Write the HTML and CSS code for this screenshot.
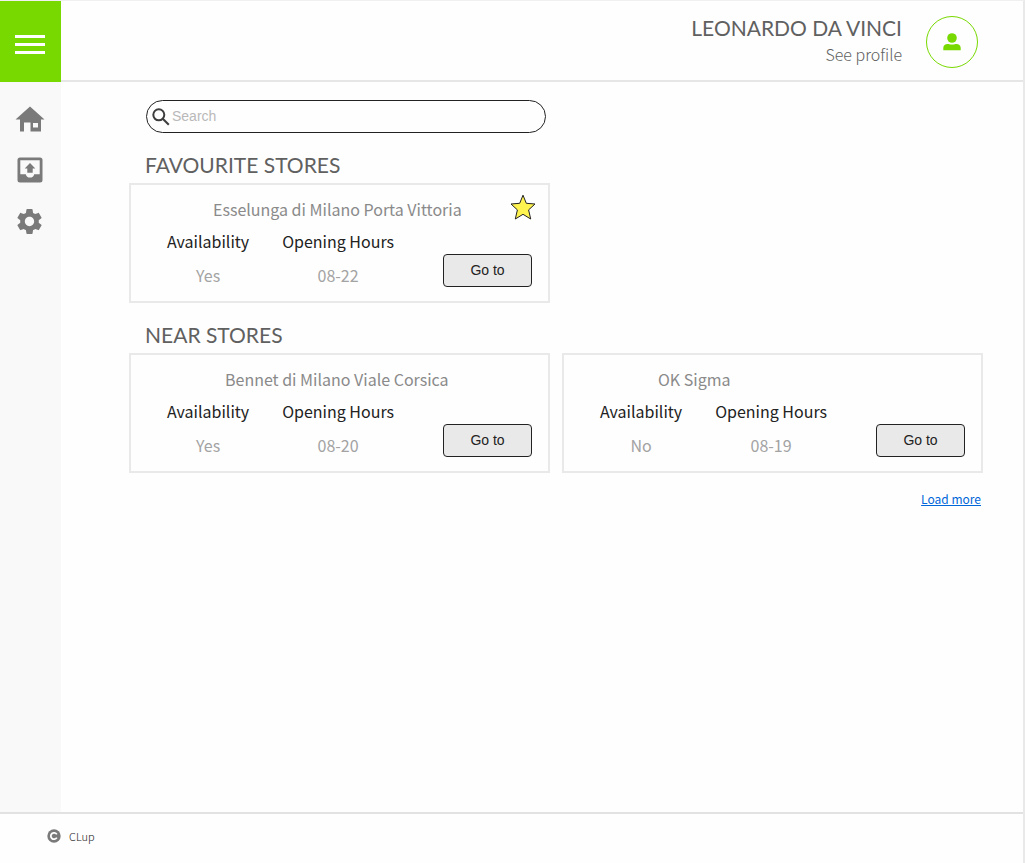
FILE: index.html
```html
<!DOCTYPE html>
<html lang="en">
<head>
<meta charset="utf-8">
<title>CLup</title>
<link rel="stylesheet" href="styles.css">
</head>
<body>
<div class="page">
  <header class="header">
    <button class="menu" type="button" aria-label="Menu"><span class="bar"></span><span class="bar"></span><span class="bar"></span></button>
    <div class="user">
      <div class="user-text">
        <span class="user-name">LEONARDO DA VINCI</span>
        <a class="profile-link" href="#profile">See profile</a>
      </div>
      <a class="avatar" href="#profile" aria-label="Profile">
        <svg width="18" height="18" viewBox="0 0 18 18"><circle cx="9" cy="5" r="4.8"/><path d="M.3 17.3v-2.4c0-2.400 1.900-3.900 4.300-3.900.9 0 2 .5 4.400.5s3.500-.5 4.400-.5c2.400 0 4.300 1.500 4.300 3.900v2.400z"/></svg>
      </a>
    </div>
  </header>
  <div class="body">
    <nav class="sidebar">
      <a href="#home" aria-label="Home"><svg width="30" height="26" viewBox="0 0 30 26"><path fill-rule="evenodd" d="M15 .5 29.500 13.500H26V25.500H15.500V16.500H9V25.500H5V13.500H.5zM18 17v4.500h5V17z"/></svg></a>
      <a href="#bookings" aria-label="Bookings"><svg width="26" height="26" viewBox="0 0 26 26"><path fill-rule="evenodd" d="M3 .5h20a2.500 2.500 0 0 1 2.500 2.500v20a2.500 2.500 0 0 1-2.500 2.500H3A2.500 2.500 0 0 1 .5 23V3A2.500 2.500 0 0 1 3 .5zM3.300 3.300V17.200H8.800a4.300 4.300 0 0 0 8.400 0H22.700V3.300zM13 6l5.300 5.500H15.700V15.700H10.300V11.500H7.700z"/></svg></a>
      <a href="#settings" aria-label="Settings"><svg width="31" height="31" viewBox="0 0 24 24"><path d="M19.140 12.940c.04-.3.060-.61.060-.94 0-.32-.02-.64-.07-.94l2.030-1.580c.18-.14.230-.41.120-.61l-1.920-3.320c-.12-.22-.37-.29-.59-.22l-2.390.96c-.5-.38-1.030-.7-1.620-.94l-.36-2.540c-.04-.24-.24-.41-.48-.41h-3.840c-.24 0-.43.17-.47.41l-.36 2.540c-.59.24-1.130.57-1.620.94l-2.390-.96c-.22-.08-.47 0-.59.220L2.740 8.870c-.12.210-.08.470.120.610l2.030 1.580c-.05.3-.09.630-.09.940s.02.640.070.940l-2.030 1.580c-.18.140-.23.410-.12.610l1.920 3.320c.12.220.37.290.59.220l2.390-.96c.5.380 1.030.7 1.620.940l.36 2.540c.05.240.24.410.48.410h3.840c.24 0 .44-.17.470-.41l.36-2.540c.59-.24 1.130-.56 1.620-.94l2.390.96c.22.080.47 0 .59-.22l1.920-3.320c.12-.22.070-.47-.12-.61l-2.010-1.580zM12 15.600c-1.980 0-3.600-1.620-3.600-3.600s1.620-3.600 3.600-3.600 3.600 1.620 3.600 3.600-1.620 3.600-3.600 3.600z"/></svg></a>
    </nav>
    <main class="main">
      <label class="search">
        <svg width="18" height="18" viewBox="0 0 18 18"><circle cx="6.800" cy="6.800" r="5.500"/><path d="M10.800 10.800 16.800 16.800"/></svg>
        <input type="search" placeholder="Search" aria-label="Search">
      </label>
      <section>
        <h2 class="title">FAVOURITE STORES</h2>
        <div class="cards">
          <article class="card favourite">
            <h3 class="name">Esselunga di Milano Porta Vittoria</h3>
            <button class="star" type="button" aria-label="Favourite"><svg width="26" height="26" viewBox="0 0 26 26"><path d="M13 1.200 16.300 9.300 25 10 18.600 15.900 20.700 25 13 20.300 5.300 25 7.400 15.900 1 10 9.700 9.300z"/></svg></button>
            <div class="details">
              <dl class="facts"><div><dt>Availability</dt><dd>Yes</dd></div><div><dt>Opening Hours</dt><dd>08-22</dd></div></dl>
              <button class="go" type="button">Go to</button>
            </div>
          </article>
        </div>
      </section>
      <section>
        <h2 class="title">NEAR STORES</h2>
        <div class="cards">
          <article class="card">
            <h3 class="name">Bennet di Milano Viale Corsica</h3>
            <div class="details">
              <dl class="facts"><div><dt>Availability</dt><dd>Yes</dd></div><div><dt>Opening Hours</dt><dd>08-20</dd></div></dl>
              <button class="go" type="button">Go to</button>
            </div>
          </article>
          <article class="card">
            <h3 class="name">OK Sigma</h3>
            <div class="details">
              <dl class="facts"><div><dt>Availability</dt><dd>No</dd></div><div><dt>Opening Hours</dt><dd>08-19</dd></div></dl>
              <button class="go" type="button">Go to</button>
            </div>
          </article>
        </div>
      </section>
      <a class="more" href="#more">Load more</a>
    </main>
  </div>
  <footer class="footer">
    <svg width="14" height="14" viewBox="0 0 14 14"><circle cx="7" cy="7" r="6.700" fill="#7a7a7a"/><path d="M9.800 5.400A3.200 3.200 0 1 0 9.800 8.600" fill="none" stroke="#fff" stroke-width="1.800"/></svg>
    <span>CLup</span>
  </footer>
</div>
</body>
</html>
```
FILE: styles.css
```css
* { box-sizing: border-box; }
body {
  margin: 0;
  background: #fefefe;
  color: #222;
  font-family: "Noto Sans CJK JP", "Noto Sans", sans-serif;
  font-size: 16px;
}
.page {
  display: flex;
  flex-direction: column;
  min-height: 100vh;
  border-top: 1px solid #f0f0f0;
  border-right: 2px solid #e9e9e9;
}
.header {
  display: flex;
  justify-content: space-between;
  height: 81px;
  border-bottom: 2px solid #e6e6e6;
}
.menu {
  display: flex;
  flex-direction: column;
  align-items: center;
  justify-content: center;
  gap: 5px;
  width: 61px;
  height: 81px;
  padding: 6px 2px 0 0;
  border: 0;
  background: #78d900;
}
.bar { width: 30px; height: 3px; background: #fff; }
.user {
  display: flex;
  align-items: center;
  gap: 24px;
  padding: 3px 45px 0 0;
}
.user-text {
  display: flex;
  flex-direction: column;
  align-items: flex-end;
  padding-bottom: 4px;
}
.user-name {
  font-family: Lato, sans-serif;
  font-size: 21px;
  line-height: 28px;
  color: #606060;
}
.profile-link {
  font-size: 16px;
  line-height: 24px;
  font-weight: 300;
  color: #606060;
  text-decoration: none;
}
.avatar {
  display: flex;
  align-items: center;
  justify-content: center;
  width: 52px;
  height: 52px;
  border: 1px solid #78d900;
  border-radius: 50%;
}
.avatar svg { fill: #78d900; }
.body { display: flex; flex: 1; }
.sidebar {
  display: flex;
  flex-direction: column;
  gap: 21px;
  width: 61px;
  padding: 22px 0 0 14px;
  background: #f9f9f9;
}
.sidebar a {
  display: flex;
  align-items: center;
  justify-content: center;
  width: 31px;
  height: 30px;
}
.sidebar svg { fill: #7a7a7a; }
.main {
  display: flex;
  flex-direction: column;
  flex: 1;
  padding: 18px 40px 24px 68px;
}
.search {
  display: flex;
  align-items: center;
  width: 400px;
  max-width: 100%;
  height: 33px;
  margin: 0 0 18px 17px;
  padding: 0 12px 0 5px;
  border: 1px solid #222;
  border-radius: 17px;
}
.search svg { fill: none; stroke: #3d3d3d; stroke-width: 2; }
.search input {
  flex: 1;
  padding: 0 2px 2px;
  border: 0;
  outline: 0;
  background: none;
  font: 14px "Liberation Sans", Arial, sans-serif;
}
.search input::placeholder { color: #b9b9b9; }
.title {
  margin: 0;
  padding: 0 0 4px 16px;
  font: 21px/28px Lato, sans-serif;
  color: #606060;
}
.cards {
  display: grid;
  grid-template-columns: 1fr 1fr;
  gap: 12px;
  margin-bottom: 18px;
}
.card {
  position: relative;
  min-height: 120px;
  padding: 12px 16px 13px 36px;
  border: 2px solid #e9e9e9;
}
.name {
  margin: 0 0 8px 58px;
  font-size: 16px;
  line-height: 24px;
  font-weight: 400;
  color: #8a8a8a;
}
.favourite .name { margin-left: 46px; }
.star {
  position: absolute;
  top: 9px;
  right: 12px;
  padding: 0;
  border: 0;
  background: none;
}
.star svg { display: block; fill: #fff44f; stroke: #222; stroke-width: 1; }
.details {
  display: flex;
  align-items: flex-end;
  justify-content: space-between;
}
.facts {
  display: flex;
  gap: 33px;
  margin: 0;
  line-height: 24px;
  text-align: center;
}
.facts dd {
  margin: 10px 0 0;
  color: #a3a3a3;
}
.go {
  width: 89px;
  height: 33px;
  padding: 0 0 2px;
  border: 1px solid #222;
  border-radius: 4px;
  background: #e9e9e9;
  color: #222;
  font: 14px "Liberation Sans", Arial, sans-serif;
}
.more {
  align-self: flex-end;
  margin: -2px 2px 0 0;
  font-size: 12px;
  line-height: 20px;
  color: #0066d9;
}
.footer {
  display: flex;
  align-items: center;
  gap: 8px;
  height: 51px;
  padding: 0 47px 5px;
  border-top: 2px solid #e2e2e2;
  font-size: 11px;
  font-weight: 300;
}
```
